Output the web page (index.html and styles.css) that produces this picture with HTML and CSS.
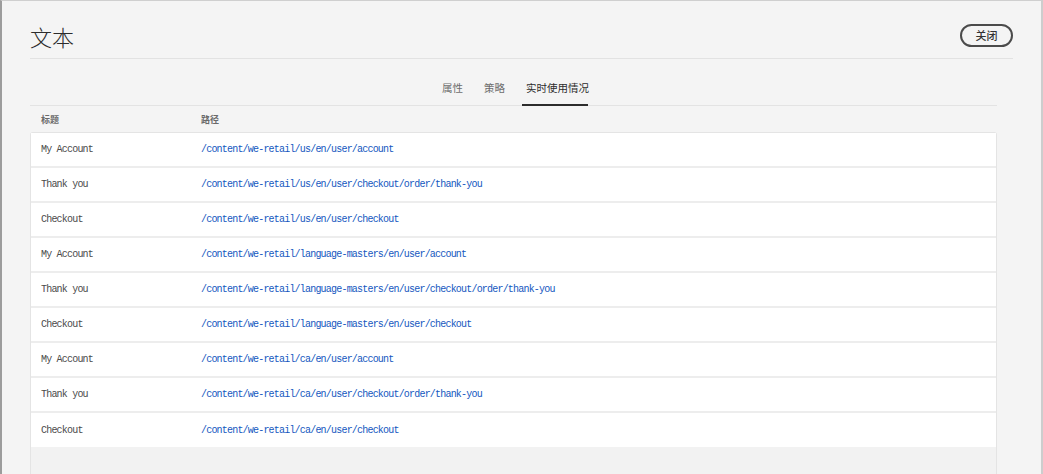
FILE: index.html
```html
<!DOCTYPE html>
<html lang="zh">
<head>
<meta charset="utf-8">
<title>文本</title>
<link rel="stylesheet" href="styles.css">
</head>
<body>
<div class="frame">
  <header class="header">
    <h1 class="title">文本</h1>
    <button class="close">关闭</button>
  </header>
  <main class="main">
    <nav class="tabs">
      <span class="tab">属性</span>
      <span class="tab">策略</span>
      <span class="tab active">实时使用情况</span>
    </nav>
    <div class="thead">
      <span class="col-title">标题</span>
      <span class="col-path">路径</span>
    </div>
    <div class="card">
      <div class="row"><span class="col-title">My Account</span><a class="col-path">/content/we-retail/us/en/user/account</a></div>
      <div class="row"><span class="col-title">Thank you</span><a class="col-path">/content/we-retail/us/en/user/checkout/order/thank-you</a></div>
      <div class="row"><span class="col-title">Checkout</span><a class="col-path">/content/we-retail/us/en/user/checkout</a></div>
      <div class="row"><span class="col-title">My Account</span><a class="col-path">/content/we-retail/language-masters/en/user/account</a></div>
      <div class="row"><span class="col-title">Thank you</span><a class="col-path">/content/we-retail/language-masters/en/user/checkout/order/thank-you</a></div>
      <div class="row"><span class="col-title">Checkout</span><a class="col-path">/content/we-retail/language-masters/en/user/checkout</a></div>
      <div class="row"><span class="col-title">My Account</span><a class="col-path">/content/we-retail/ca/en/user/account</a></div>
      <div class="row"><span class="col-title">Thank you</span><a class="col-path">/content/we-retail/ca/en/user/checkout/order/thank-you</a></div>
      <div class="row last"><span class="col-title">Checkout</span><a class="col-path">/content/we-retail/ca/en/user/checkout</a></div>
    </div>
  </main>
</div>
</body>
</html>
```
FILE: styles.css
```css
html, body {
  margin: 0;
  padding: 0;
  height: 100%;
  overflow: hidden;
}
body {
  background: #f4f4f4;
  font-family: "Noto Sans CJK SC", "Liberation Sans", sans-serif;
}
.frame {
  box-sizing: border-box;
  height: 474px;
  border-top: 1px solid #cfcfcf;
  border-left: 2px solid #9c9c9c;
  border-right: 2px solid #cdcdcd;
  display: flex;
  flex-direction: column;
}
.header {
  box-sizing: border-box;
  height: 58px;
  margin: 0 28px;
  padding-top: 12px;
  border-bottom: 1px solid #e2e2e2;
  display: flex;
  align-items: center;
  justify-content: space-between;
}
.title {
  margin: 0;
  font-size: 22px;
  font-weight: 300;
  color: #2c2c2c;
  line-height: 24px;
}
.close {
  box-sizing: border-box;
  width: 53px;
  height: 23px;
  border: 2px solid #4b4b4b;
  border-radius: 12px;
  background: transparent;
  font-family: "Noto Sans CJK SC", sans-serif;
  font-size: 11px;
  font-weight: 500;
  color: #333;
  padding: 0;
  line-height: 19px;
}
.main {
  flex: 1;
  margin-left: 28px;
  width: 967px;
  display: flex;
  flex-direction: column;
}
.tabs {
  box-sizing: border-box;
  height: 47px;
  border-bottom: 1px solid #e3e3e3;
  display: flex;
  justify-content: center;
  gap: 21px;
  padding-left: 4px;
}
.tab {
  position: relative;
  padding-top: 21px;
  font-size: 10.5px;
  line-height: 16px;
  color: #6e6e6e;
}
.tab.active {
  color: #2c2c2c;
}
.tab.active::after {
  content: "";
  position: absolute;
  left: -4px;
  right: 1px;
  bottom: -1px;
  height: 2px;
  background: #2c2c2c;
}
.thead {
  height: 26px;
  display: flex;
  align-items: center;
  font-size: 9px;
  font-weight: 700;
  color: #6a6a6a;
}
.thead .col-title {
  width: 160px;
  padding-left: 11px;
}
.card {
  flex: 1;
  box-sizing: border-box;
  border: 1px solid #e4e4e4;
  border-bottom: none;
  border-radius: 3px 3px 0 0;
  background: #f2f2f2;
}
.row {
  height: 33px;
  background: #fff;
  border-bottom: 2px solid #ededed;
  display: flex;
  align-items: center;
  font-family: "Liberation Mono", monospace;
  font-size: 10px;
  letter-spacing: -0.8px;
}
.row.last {
  height: 34px;
  border-bottom: none;
}
.row .col-title {
  width: 160px;
  padding-left: 10px;
  color: #4b4b4b;
}
.row .col-path {
  color: #1457c0;
  text-decoration: none;
}
```
